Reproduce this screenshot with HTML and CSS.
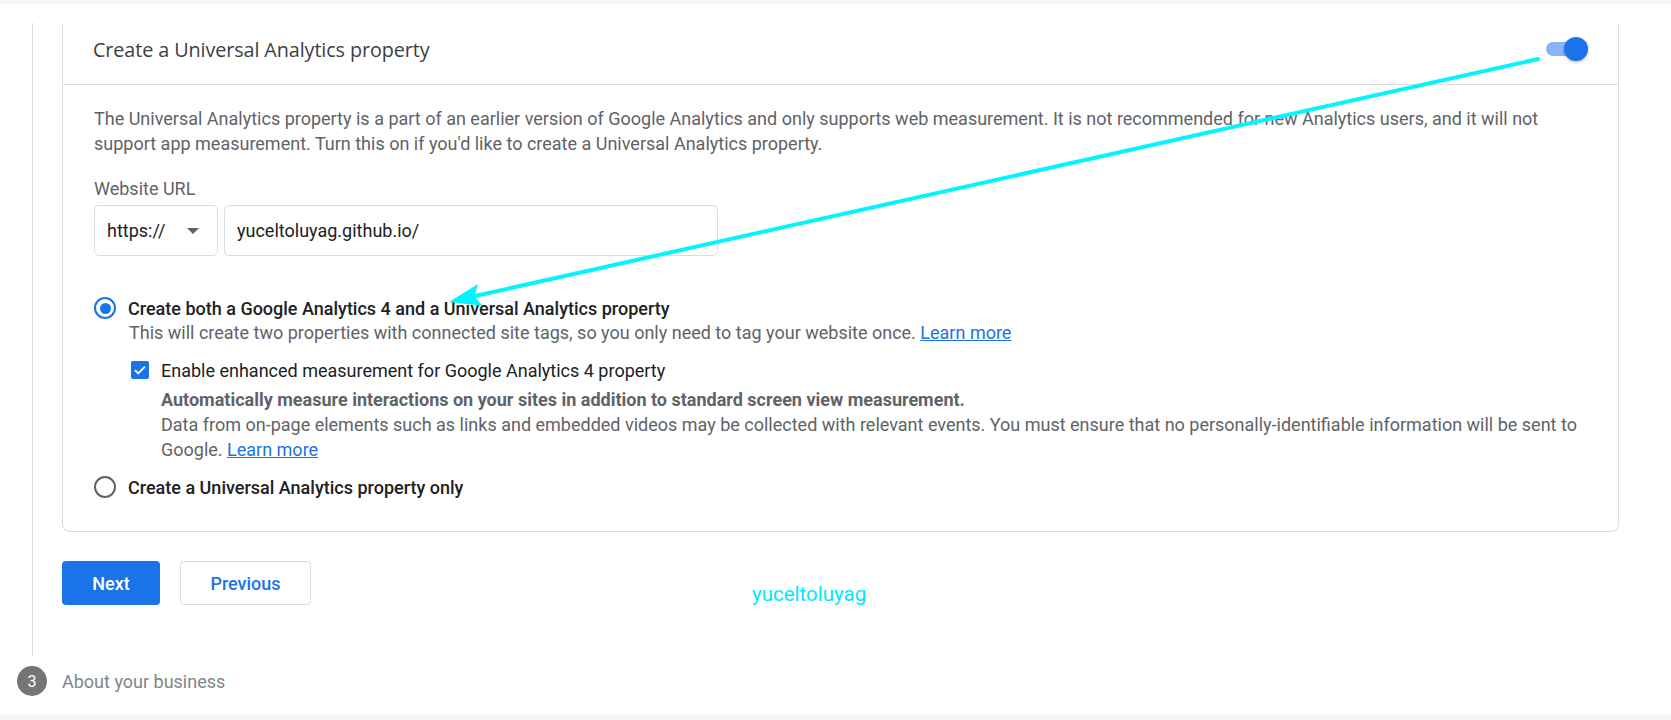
FILE: index.html
```html
<!DOCTYPE html>
<html>
<head>
<meta charset="utf-8">
<link rel="stylesheet" href="styles.css">
</head>
<body>
<div class="topband"></div>
<main class="page">
  <section class="step-content">
    <div class="card">
      <div class="card-header">
        <span class="card-title">Create a Universal Analytics property</span>
        <span class="switch"><span class="switch-track"></span><span class="switch-thumb"></span></span>
      </div>
      <div class="card-body">
        <p class="desc">The Universal Analytics property is a part of an earlier version of Google Analytics and only supports web measurement. It is not recommended for new Analytics users, and it will not support app measurement. Turn this on if you'd like to create a Universal Analytics property.</p>
        <div class="field-label">Website URL</div>
        <div class="url-row">
          <div class="select"><span>https://</span><span class="caret"></span></div>
          <div class="input">yuceltoluyag.github.io/</div>
        </div>
        <div class="radio-row first">
          <span class="radio checked"><span class="dot"></span></span>
          <span class="radio-label">Create both a Google Analytics 4 and a Universal Analytics property</span>
        </div>
        <div class="sub">
          <div class="sub-text">This will create two properties with connected site tags, so you only need to tag your website once. <a class="link">Learn more</a></div>
          <div class="check-row">
            <span class="checkbox"><svg viewBox="0 0 18 18" width="18" height="18"><path d="M4 9.2l3.2 3.2L14 5.6" fill="none" stroke="#fff" stroke-width="1.8"/></svg></span>
            <span class="check-label">Enable enhanced measurement for Google Analytics 4 property</span>
          </div>
          <div class="check-detail">
            <div class="bold">Automatically measure interactions on your sites in addition to standard screen view measurement.</div>
            <p class="detail-text">Data from on-page elements such as links and embedded videos may be collected with relevant events. You must ensure that no personally-identifiable information will be sent to Google. <a class="link">Learn more</a></p>
          </div>
        </div>
        <div class="radio-row second">
          <span class="radio"></span>
          <span class="radio-label">Create a Universal Analytics property only</span>
        </div>
      </div>
    </div>
    <div class="actions">
      <button class="btn primary">Next</button>
      <button class="btn secondary">Previous</button>
    </div>
  </section>
  <div class="step-row">
    <span class="step-num">3</span>
    <span class="step-title">About your business</span>
  </div>
</main>
<div class="bottomband"></div>
<div class="watermark">yuceltoluyag</div>
<svg class="annotation" width="1671" height="720" viewBox="0 0 1671 720">
  <line x1="1538" y1="59" x2="475" y2="296" stroke="#00f5ff" stroke-width="4" stroke-linecap="round"/>
  <polygon points="449,302 478,284 474.5,296.3 482.6,305.7" fill="#00f5ff"/>
</svg>
</body>
</html>
```

FILE: styles.css
```css
html, body {
  margin: 0;
  padding: 0;
  background: #ffffff;
  font-family: Roboto, "Liberation Sans", sans-serif;
  color: #202124;
}
body {
  width: 1671px;
  height: 720px;
  overflow: hidden;
  position: relative;
}
.topband {
  height: 4px;
  background: #f5f6f7;
}
.page {
  padding-top: 19px;
}
.step-content {
  margin-left: 32px;
  border-left: 1px solid #dadce0;
  padding-left: 29px;
  padding-right: 52px;
  padding-bottom: 51px;
}
.card {
  border: 1px solid #dadce0;
  border-top: none;
  border-radius: 0 0 8px 8px;
}
.card-header {
  height: 62px;
  box-sizing: border-box;
  border-bottom: 1px solid #dadce0;
  display: flex;
  align-items: center;
  justify-content: space-between;
  padding: 0 30px 9px 30px;
}
.card-title {
  font-family: "Open Sans", Roboto, sans-serif;
  font-size: 19.8px;
  color: #3c4043;
  letter-spacing: -0.1px;
}
.switch {
  position: relative;
  width: 42px;
  height: 24px;
  display: inline-block;
}
.switch-track {
  position: absolute;
  left: 0;
  top: 5px;
  width: 36px;
  height: 14px;
  border-radius: 7px;
  background: #8ab4f8;
}
.switch-thumb {
  position: absolute;
  right: 0;
  top: 0;
  width: 24px;
  height: 24px;
  border-radius: 50%;
  background: #1a73e8;
  box-shadow: 0 1px 3px rgba(0,0,0,0.3);
}
.card-body {
  padding: 21px 31px 32px 31px;
}
.desc {
  margin: 0;
  font-size: 18px;
  line-height: 25px;
  color: #5f6368;
}
.field-label {
  margin-top: 23px;
  font-size: 18px;
  line-height: 20px;
  color: #5f6368;
}
.url-row {
  margin-top: 6px;
  display: flex;
  gap: 6px;
}
.select, .input {
  height: 51px;
  box-sizing: border-box;
  border: 1px solid #dadce0;
  border-radius: 5px;
  display: flex;
  align-items: center;
  font-size: 18px;
  color: #202124;
}
.select {
  width: 124px;
  padding: 0 13px 0 12px;
  justify-content: space-between;
}
.caret {
  width: 0;
  height: 0;
  border-left: 6px solid transparent;
  border-right: 6px solid transparent;
  border-top: 6px solid #5f6368;
  margin-right: 5px;
}
.input {
  width: 494px;
  padding-left: 12px;
}
.radio-row {
  display: flex;
  align-items: center;
  height: 24px;
}
.radio-row.first { margin-top: 40px; }
.radio-row.second { margin-top: 13px; }
.radio {
  width: 22px;
  height: 22px;
  box-sizing: border-box;
  border: 2px solid #5f6368;
  border-radius: 50%;
  margin-right: 12px;
  display: flex;
  align-items: center;
  justify-content: center;
  flex: none;
}
.radio.checked { border-color: #1a73e8; }
.radio .dot {
  width: 11px;
  height: 11px;
  border-radius: 50%;
  background: #1a73e8;
}
.radio-label {
  font-size: 18px;
  font-weight: 500;
  color: #202124;
}
.sub {
  padding-left: 35px;
  padding-top: 1px;
}
.sub-text {
  font-size: 18px;
  line-height: 24px;
  color: #5f6368;
}
.link {
  color: #1a73e8;
  text-decoration: underline;
}
.check-row {
  margin-top: 13px;
  display: flex;
  align-items: center;
  height: 24px;
  padding-left: 2px;
}
.checkbox {
  width: 18px;
  height: 18px;
  border-radius: 2px;
  background: #1a73e8;
  margin-right: 12px;
  display: flex;
  flex: none;
}
.check-label {
  font-size: 18px;
  color: #202124;
}
.check-detail {
  margin-top: 5px;
  padding-left: 32px;
  font-size: 18px;
  line-height: 25px;
  color: #5f6368;
}
.check-detail .bold {
  font-weight: 700;
  color: #5f6368;
}
.detail-text {
  margin: 0;
}
.actions {
  margin-top: 29px;
  display: flex;
  gap: 20px;
}
.btn {
  height: 44px;
  border-radius: 4px;
  font-family: Roboto, sans-serif;
  font-size: 18px;
  font-weight: 500;
  padding: 0;
}
.btn.primary {
  width: 98px;
  background: #1a73e8;
  border: none;
  color: #ffffff;
}
.btn.secondary {
  width: 131px;
  background: #ffffff;
  border: 1px solid #dadce0;
  color: #1a73e8;
}
.step-row {
  display: flex;
  align-items: center;
  margin-top: 10px;
  height: 30px;
  padding-left: 17px;
}
.step-num {
  width: 30px;
  height: 30px;
  border-radius: 50%;
  background: #757575;
  color: #ffffff;
  font-size: 16px;
  display: flex;
  align-items: center;
  justify-content: center;
  margin-right: 15px;
}
.step-title {
  font-size: 18px;
  color: #80868b;
}
.bottomband {
  position: absolute;
  left: 0;
  top: 714px;
  width: 1671px;
  height: 6px;
  background: #f5f6f7;
}
.watermark {
  position: absolute;
  left: 752px;
  top: 582px;
  font-size: 20.5px;
  color: #00e8ff;
  font-family: Roboto, sans-serif;
}
.annotation {
  position: absolute;
  left: 0;
  top: 0;
  pointer-events: none;
}
```
